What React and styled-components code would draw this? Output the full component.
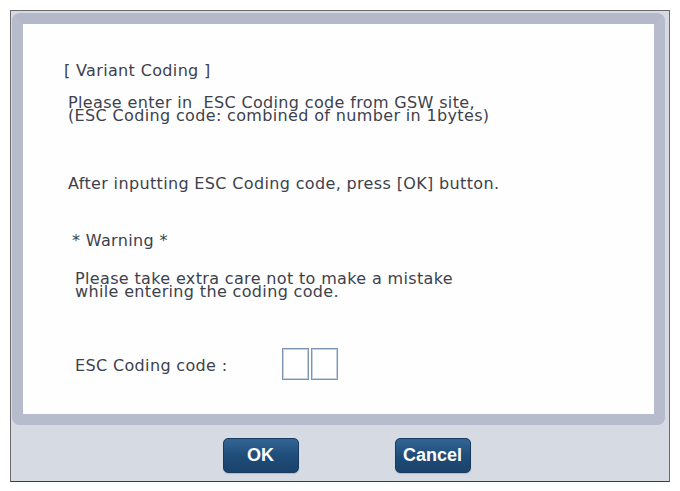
import React from "react";
import styled, { createGlobalStyle } from "styled-components";

const GlobalStyle = createGlobalStyle`
  html, body {
    margin: 0;
    padding: 0;
    background: #ffffff;
  }
`;

const Window = styled.div`
  box-sizing: border-box;
  margin: 10px 0 0 10px;
  width: 660px;
  height: 472px;
  border: 1px solid #6a6a6a;
  border-bottom-color: #3c3c3c;
  background: #d6dae2;
  padding: 2px 4px 0 1px;
  display: flex;
  flex-direction: column;
`;

const Panel = styled.div`
  box-sizing: border-box;
  height: 412px;
  border: 11px solid #b6bccb;
  border-top-color: #b3b9c8;
  border-radius: 8px;
  background: #fefefe;
  padding: 40px 0 0 41px;
  font-family: "DejaVu Sans", "Liberation Sans", sans-serif;
  font-size: 16px;
  letter-spacing: 0.35px;
  line-height: 13px;
  color: #3d414d;
`;

const Block = styled.div`
  margin-top: ${(p) => p.$top || 0}px;
  margin-left: ${(p) => p.$indent || 0}px;
  white-space: pre;
`;

const CodeRow = styled.div`
  display: flex;
  align-items: center;
  margin-top: ${(p) => p.$top}px;
  margin-left: 11px;
  height: 32px;
`;

const Label = styled.span`
  width: 207px;
  padding-top: 3px;
`;

const CodeBox = styled.div`
  box-sizing: border-box;
  width: 27px;
  height: 32px;
  margin-right: 2px;
  border: 1px solid #7d95b2;
  box-shadow: inset 0 0 0 1px #c3d0df;
  background: #ffffff;
`;

const Footer = styled.div`
  flex: 1;
  display: flex;
  justify-content: center;
  align-items: flex-start;
  gap: 96px;
  padding: 13px 0 0 16px;
`;

const Button = styled.button`
  box-sizing: border-box;
  width: 76px;
  height: 35px;
  border: 1px solid #173c60;
  border-radius: 5px;
  background: linear-gradient(#336595, #1e4b77 55%, #1a436c);
  color: #ffffff;
  font-family: "Liberation Sans", Arial, sans-serif;
  font-weight: bold;
  font-size: 18px;
  padding: 0;
  box-shadow: 0 1px 1px rgba(0, 0, 0, 0.15);
`;

export default function App() {
  return (
    <>
      <GlobalStyle />
      <Window>
        <Panel>
          <Block>[ Variant Coding ]</Block>
          <Block $top={19} $indent={4}>
            {"Please enter in  ESC Coding code from GSW site,\n(ESC Coding code: combined of number in 1bytes)"}
          </Block>
          <Block $top={55} $indent={4}>
            After inputting ESC Coding code, press [OK] button.
          </Block>
          <Block $top={44} $indent={8}>
            * Warning *
          </Block>
          <Block $top={25} $indent={11}>
            {"Please take extra care not to make a mistake\nwhile entering the coding code."}
          </Block>
          <CodeRow $top={50}>
            <Label>ESC Coding code :</Label>
            <CodeBox />
            <CodeBox />
          </CodeRow>
        </Panel>
        <Footer>
          <Button>OK</Button>
          <Button>Cancel</Button>
        </Footer>
      </Window>
    </>
  );
}
